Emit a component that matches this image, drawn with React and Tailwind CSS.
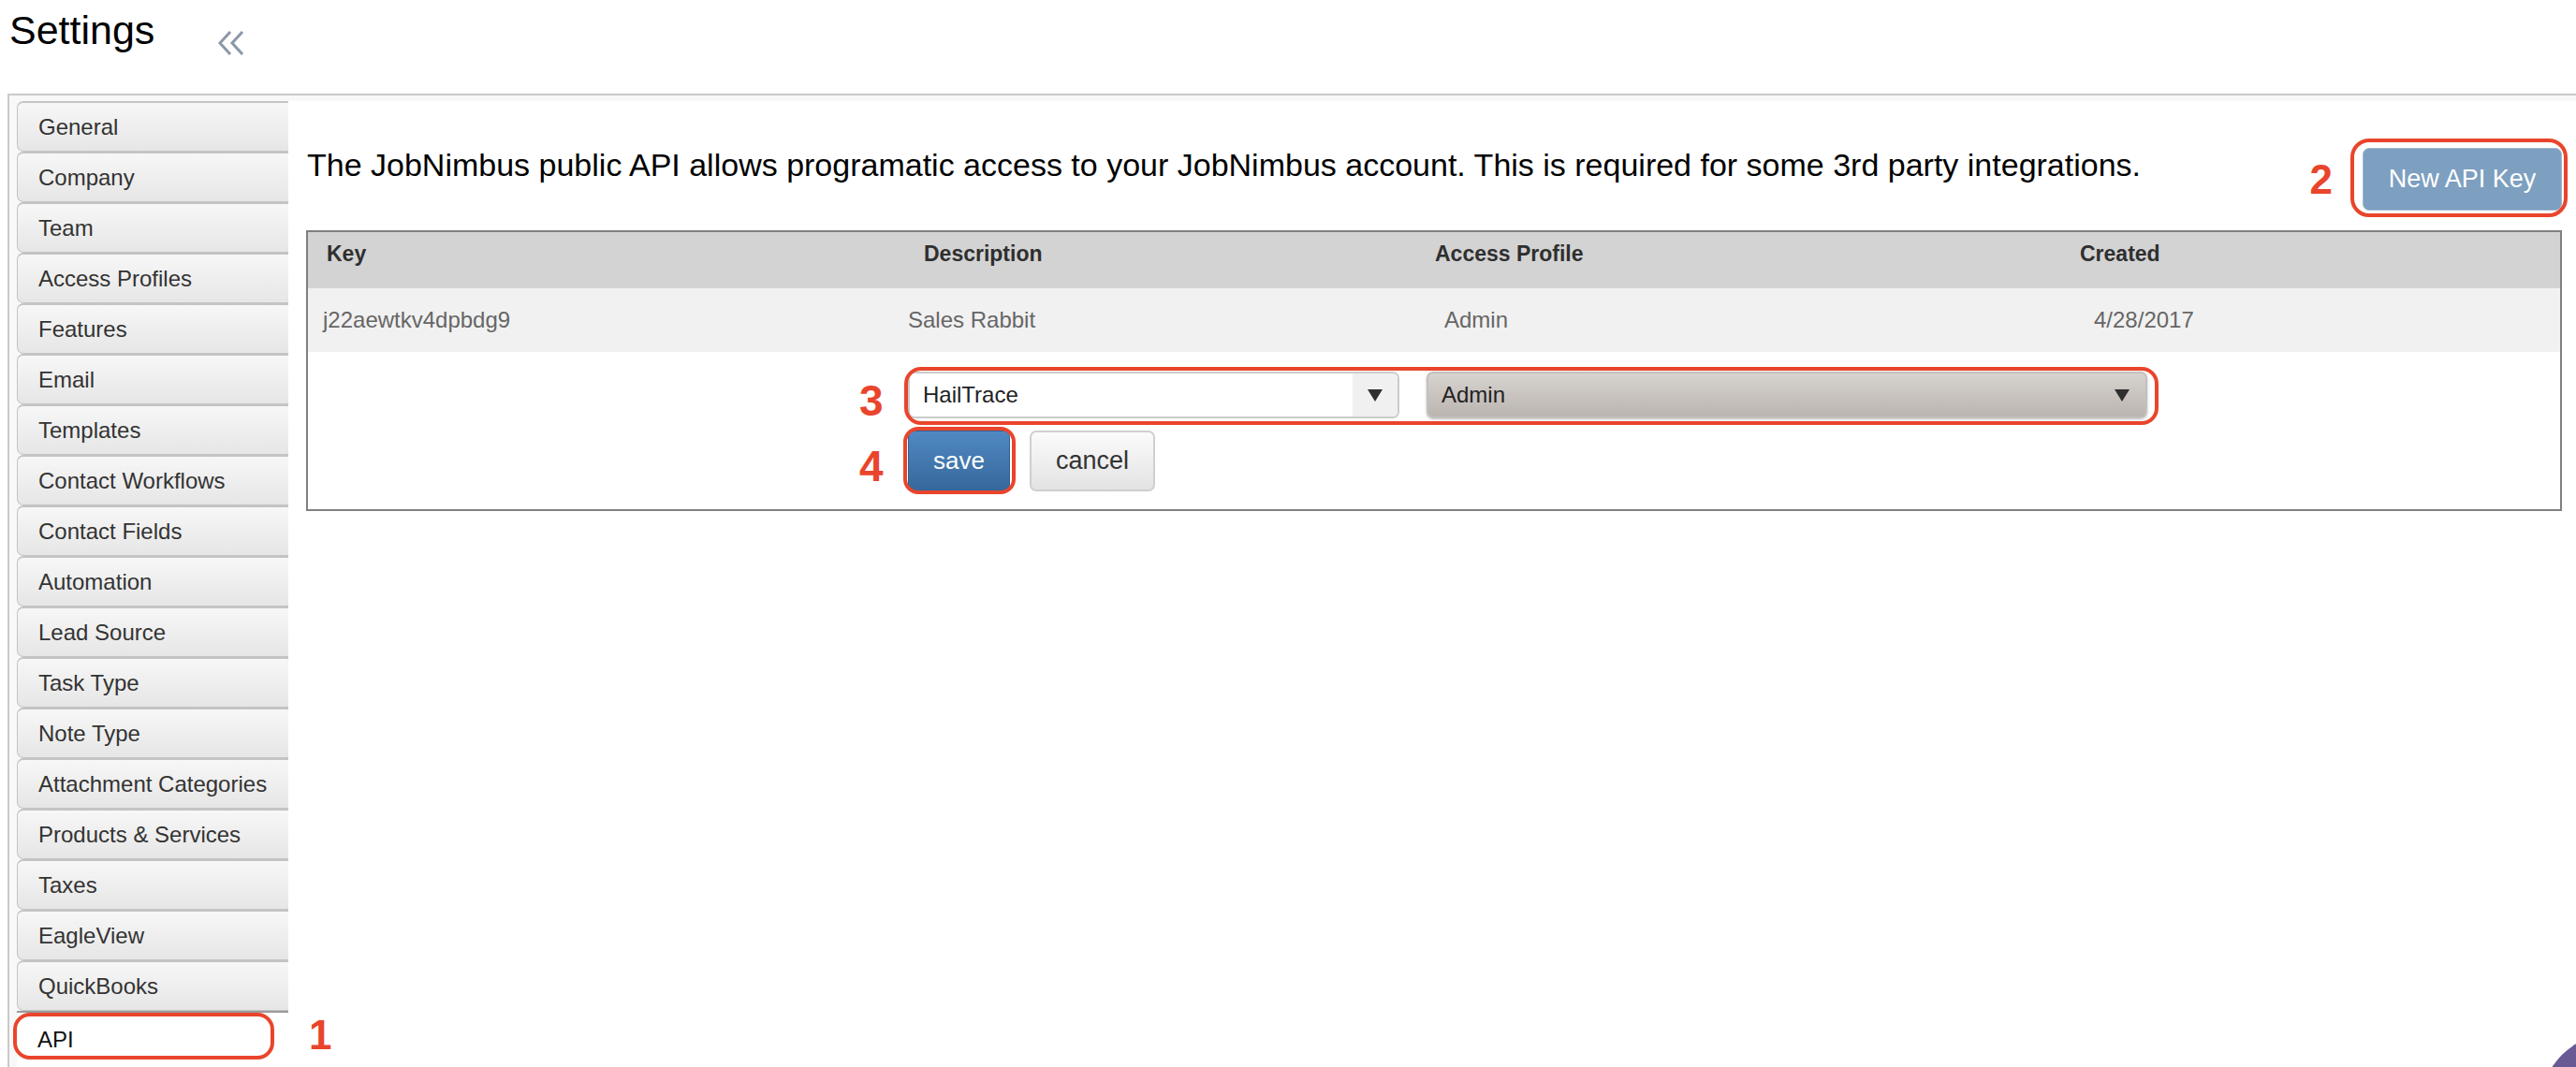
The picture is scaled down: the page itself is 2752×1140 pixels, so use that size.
import React from "react";

const tabs = [
  "General",
  "Company",
  "Team",
  "Access Profiles",
  "Features",
  "Email",
  "Templates",
  "Contact Workflows",
  "Contact Fields",
  "Automation",
  "Lead Source",
  "Task Type",
  "Note Type",
  "Attachment Categories",
  "Products & Services",
  "Taxes",
  "EagleView",
  "QuickBooks",
];

function Arrow() {
  return (
    <svg width="16" height="13" viewBox="0 0 16 13">
      <polygon points="0,0 16,0 8,13" fill="#2f2f2f" />
    </svg>
  );
}

function Mark({ children, className }) {
  return (
    <span
      className={
        "font-bold leading-none text-[#e9452c] text-[44px] " + (className || "")
      }
    >
      {children}
    </span>
  );
}

export default function App() {
  return (
    <div className="relative h-[1140px] overflow-hidden bg-white text-[#333] [font-family:'Liberation_Sans',Arial,sans-serif]">
      {/* Header */}
      <div className="flex items-start h-[100px]">
        <h1 className="pl-[10px] pt-[11px] text-[43px] leading-none text-black">
          Settings
        </h1>
        <svg
          className="ml-[68px] mt-[33px]"
          width="28"
          height="26"
          viewBox="0 0 28 26"
          fill="none"
          stroke="#8b98a8"
          strokeWidth="3"
        >
          <polyline points="13,1 2,13 13,25" />
          <polyline points="26,1 15,13 26,25" />
        </svg>
      </div>

      {/* Frame */}
      <div className="ml-[8px] flex border-t-2 border-l-2 border-[#c9c9c9] bg-[#f8f8f8]">
        {/* Sidebar */}
        <div className="w-[298px] shrink-0 pt-[6px] pl-[8px]">
          {tabs.map((t) => (
            <div
              key={t}
              className="flex items-center h-[54px] pl-[22px] border border-t-2 border-r-0 border-[#c4c4c4] rounded-l-[7px] bg-gradient-to-b from-[#f7f7f7] to-[#e6e6e6] text-[24px] text-[#333]"
            >
              {t}
            </div>
          ))}
          <div className="relative flex items-center h-[60px] pl-[22px] border-t-2 border-[#9a9a9a] bg-white text-[24px] text-[#111]">
            API
            <div className="absolute left-[-4px] top-[0px] w-[279px] h-[50px] border-4 border-[#e9452c] rounded-[18px]" />
            <Mark className="absolute left-[312px] top-[2px] text-[42px]">1</Mark>
          </div>
        </div>

        {/* Content */}
        <div className="flex-1 mt-[6px] bg-white pl-[19px] pr-[15px] pt-[39px] pb-[600px]">
          <div className="flex items-start justify-between">
            <p className="ml-[1px] mt-[12px] text-[34px] leading-none text-black">
              The JobNimbus public API allows programatic access to your JobNimbus account. This is required for some 3rd party integrations.
            </p>
            <div className="flex items-center gap-[32px] mt-[11px]">
              <Mark className="text-[40px]">2</Mark>
              <div className="relative">
                <button className="w-[213px] h-[67px] rounded-[7px] bg-[#7d9fc0] border border-[#a3b9cf] text-white text-[27px]">
                  New API Key
                </button>
                <div className="absolute left-[-13px] right-[-6px] top-[-10px] bottom-[-7px] border-4 border-[#e9452c] rounded-[20px]" />
              </div>
            </div>
          </div>

          {/* Table */}
          <div className="mt-[21px] border-2 border-[#808080]">
            <div className="flex h-[60px] pt-[12px] bg-[#d3d3d3] text-[23px] font-bold leading-none text-[#2f2f2f]">
              <div className="w-[658px] pl-[20px]">Key</div>
              <div className="w-[546px]">Description</div>
              <div className="w-[689px]">Access Profile</div>
              <div className="flex-1">Created</div>
            </div>
            <div className="flex h-[68px] pt-[22px] bg-[#f1f1f1] text-[24px] leading-none text-[#666]">
              <div className="w-[641px] pl-[16px]">j22aewtkv4dpbdg9</div>
              <div className="w-[573px]">Sales Rabbit</div>
              <div className="w-[694px]">Admin</div>
              <div className="flex-1">4/28/2017</div>
            </div>
            <div className="pl-[641px] pt-[21px] pb-[19px]">
              <div className="relative flex w-fit gap-[29px]">
                <Mark className="absolute left-[-52px] top-[8px] text-[46px]">3</Mark>
                <div className="flex w-[525px] h-[50px] rounded-[7px] border-2 border-[#cbcbcb] bg-white overflow-hidden">
                  <div className="flex-1 flex items-center pl-[14px] text-[24px] text-[#222]">
                    HailTrace
                  </div>
                  <div className="w-[48px] flex items-center justify-center bg-[#f0f0f0]">
                    <Arrow />
                  </div>
                </div>
                <div className="flex items-center justify-between w-[770px] h-[50px] rounded-[7px] border-2 border-[#c4c0bc] bg-gradient-to-b from-[#d7d3cf] to-[#bbb5b0] pl-[14px] pr-[17px] text-[24px] text-[#222] shadow-[0_1px_3px_rgba(0,0,0,0.25)]">
                  Admin
                  <Arrow />
                </div>
                <div className="absolute left-[-4px] right-[-12px] top-[-5px] bottom-[-7px] border-4 border-[#e9452c] rounded-[18px]" />
              </div>
              <div className="relative flex gap-[21px] mt-[13px]">
                <Mark className="absolute left-[-52px] top-[15px] text-[46px]">4</Mark>
                <div className="relative">
                  <button className="w-[109px] h-[65px] rounded-[7px] border border-[#2f5f92] bg-gradient-to-b from-[#5089c2] to-[#36689c] text-white text-[26px]">
                    save
                  </button>
                  <div className="absolute left-[-5px] right-[-6px] top-[-4px] bottom-[-3px] border-4 border-[#e9452c] rounded-[16px]" />
                </div>
                <button className="w-[134px] h-[65px] rounded-[7px] border-2 border-[#cfcfcf] bg-gradient-to-b from-[#fbfbfb] to-[#e3e3e3] text-[#333] text-[27px]">
                  cancel
                </button>
              </div>
            </div>
          </div>
        </div>
      </div>

      {/* chat bubble */}
      <div className="absolute left-[2715px] top-[1105px] w-[150px] h-[150px] rounded-full bg-[#6a5a93]" />
    </div>
  );
}
